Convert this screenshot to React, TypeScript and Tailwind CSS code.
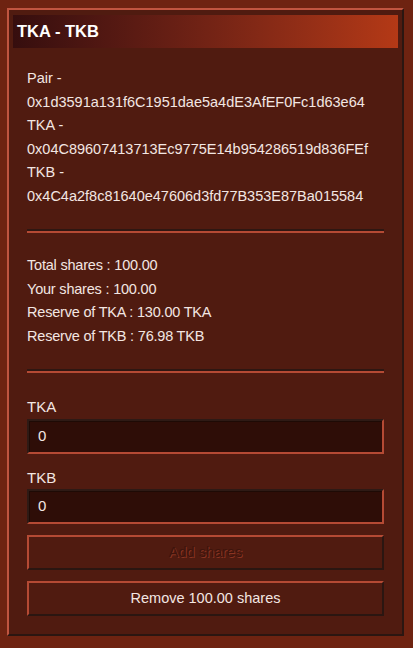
import React from "react";

const font = { fontFamily: '"Liberation Sans", Arial, sans-serif' };

function Divider() {
  return <div className="my-[21px] h-[4px] border-t-2 border-b-2 border-t-[#2e1712] border-b-[#b54a34]" />;
}

function Field({ label }: { label: string }) {
  return (
    <div className="flex flex-col">
      <div className="leading-[23.5px] text-[15px] text-[#f3e6e2]">{label}</div>
      <div className="h-[35px] border-2 border-t-[#2e1a15] border-l-[#2e1a15] border-b-[#b54a34] border-r-[#b54a34] bg-[#2e0d07] shadow-[inset_1px_1px_0_#1e0a05] flex items-center px-[9px] text-[15px] text-[#f3e6e2]">
        0
      </div>
    </div>
  );
}

export default function App() {
  return (
    <div className="min-h-[648px] w-[413px] bg-[#6e2311] pt-[8px] pl-[7px]" style={font}>
      <div className="w-[397px] border-2 border-t-[#c05540] border-l-[#c05540] border-b-[#2b1611] border-r-[#2b1611] bg-[#501b10] px-[4px] pt-[5px] pb-[18px]">
        <div className="h-[33px] bg-gradient-to-r from-[#360e0e] to-[#b43916] flex items-center pl-[4px] text-white font-bold text-[16.5px]">
          TKA - TKB
        </div>
        <div className="px-[14px] pt-[19px] text-[14.5px] text-[#f3e6e2]">
          <div className="leading-[23.5px]">
            <div>Pair -</div>
            <div>0x1d3591a131f6C1951dae5a4dE3AfEF0Fc1d63e64</div>
            <div>TKA -</div>
            <div className="whitespace-nowrap overflow-hidden">0x04C89607413713Ec9775E14b954286519d836FEf</div>
            <div>TKB -</div>
            <div>0x4C4a2f8c81640e47606d3fd77B353E87Ba015584</div>
          </div>
          <Divider />
          <div className="leading-[23.5px] tracking-[-0.2px]">
            <div>Total shares : 100.00</div>
            <div>Your shares : 100.00</div>
            <div>Reserve of TKA : 130.00 TKA</div>
            <div>Reserve of TKB : 76.98 TKB</div>
          </div>
          <Divider />
          <div className="flex flex-col pt-px">
            <Field label="TKA" />
            <div className="h-[12px]" />
            <Field label="TKB" />
            <div className="h-[11px]" />
            <button
              disabled
              className="h-[35px] border-2 border-t-[#b54a34] border-l-[#b54a34] border-b-[#2b1611] border-r-[#2b1611] bg-[#501b10] text-[14.5px] text-[#3e140c] [text-shadow:1px_1px_0_#8a3422]"
            >
              Add shares
            </button>
            <div className="h-[11px]" />
            <button className="h-[35px] border-2 border-t-[#b54a34] border-l-[#b54a34] border-b-[#2b1611] border-r-[#2b1611] bg-[#501b10] text-[14.5px] text-[#f3e6e2]">
              Remove 100.00 shares
            </button>
          </div>
        </div>
      </div>
    </div>
  );
}
